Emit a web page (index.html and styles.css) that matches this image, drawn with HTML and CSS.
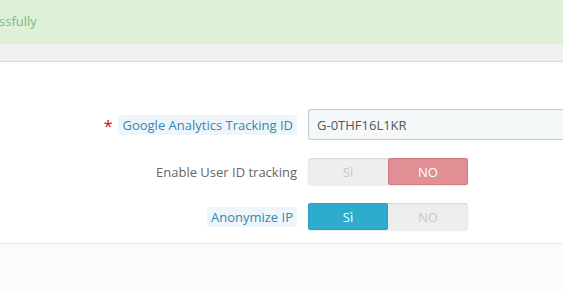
FILE: index.html
```html
<!DOCTYPE html>
<html>
<head>
<meta charset="utf-8">
<link rel="stylesheet" href="styles.css">
</head>
<body>
<div class="alert">ssfully</div>
<div class="band"></div>
<div class="panel">
  <div class="form">
    <div class="label"><span class="req">*</span><span class="tip">Google Analytics Tracking ID</span></div>
    <div class="ctrl"><input class="input" type="text" value="G-0THF16L1KR"></div>

    <div class="label"><span class="plain">Enable User ID tracking</span></div>
    <div class="ctrl">
      <div class="switch">
        <span class="opt">Sì</span>
        <span class="opt no-on">NO</span>
      </div>
    </div>

    <div class="label"><span class="tip">Anonymize IP</span></div>
    <div class="ctrl">
      <div class="switch">
        <span class="opt yes-on">Sì</span>
        <span class="opt">NO</span>
      </div>
    </div>
  </div>
</div>
<div class="footer"></div>
</body>
</html>
```
FILE: styles.css
```css
html, body {
  margin: 0;
  padding: 0;
  background: #fafbfc;
  font-family: "Open Sans", "Liberation Sans", sans-serif;
  font-size: 13px;
  overflow: hidden;
}
.alert {
  height: 44px;
  box-sizing: border-box;
  background: #dff0d8;
  color: #72c279;
  font-size: 13px;
  line-height: 18px;
  padding-top: 12px;
  margin-left: -1px;
}
.band {
  height: 17px;
  background: #eff1f2;
  border-bottom: 1px solid #d3d8db;
}
.panel {
  background: #fff;
  border-bottom: 1px solid #e6e6e6;
  padding: 47px 0 14px;
  height: 182px;
  box-sizing: border-box;
}
.form {
  display: grid;
  grid-template-columns: 297px 1fr;
  column-gap: 11px;
  row-gap: 18px;
  align-items: center;
}
.label {
  display: flex;
  justify-content: flex-end;
  align-items: center;
  color: #555;
}
.req {
  color: #e40000;
  font-size: 16px;
  margin-right: 6px;
  line-height: 1;
  position: relative;
  top: 1px;
}
.tip {
  background: #eff6fb;
  color: #3586ae;
  border-radius: 3px;
  padding: 1px 4px;
  line-height: 18px;
}
.plain {
  color: #666;
  line-height: 20px;
}
.ctrl {
  display: flex;
}
.input {
  width: 100%;
  height: 31px;
  box-sizing: border-box;
  border: 1px solid #bbcdd2;
  border-right: none;
  border-radius: 3px 0 0 3px;
  background: #f5f8f9;
  color: #555;
  font-family: "Open Sans", "Liberation Sans", sans-serif;
  font-size: 13px;
  padding: 0 8px;
  outline: none;
}
.switch {
  display: flex;
  width: 160px;
  height: 27px;
  background: #eee;
  border-radius: 3px;
  box-shadow: inset 0 1px 2px rgba(0,0,0,0.1), 0 1px 1px rgba(0,0,0,0.08);
}
.opt {
  flex: 1;
  display: flex;
  align-items: center;
  justify-content: center;
  color: #c8c8c8;
  font-size: 13px;
  border-radius: 3px;
}
.no-on {
  background: #e08f95;
  color: #fff;
  box-shadow: inset 0 0 0 1px #d27a81;
}
.yes-on {
  background: #2eacce;
  color: #fff;
  box-shadow: inset 0 0 0 1px #2a9fbf;
}
.footer {
  height: 60px;
  background: #fafbfc;
}
```
